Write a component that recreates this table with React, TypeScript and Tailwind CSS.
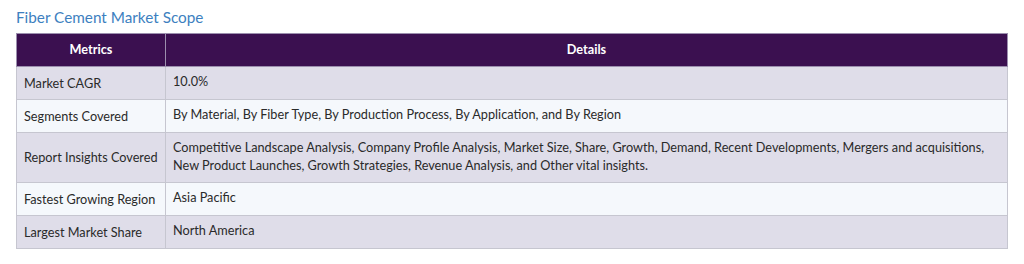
const rows: [string, string][] = [
  ['Market CAGR', '10.0%'],
  ['Segments Covered', 'By Material, By Fiber Type, By Production Process, By Application, and By Region'],
  ['Report Insights Covered', 'Competitive Landscape Analysis, Company Profile Analysis, Market Size, Share, Growth, Demand, Recent Developments, Mergers and acquisitions, New Product Launches, Growth Strategies, Revenue Analysis, and Other vital insights.'],
  ['Fastest Growing Region', 'Asia Pacific'],
  ['Largest Market Share', 'North America'],
]

export default function App() {
  return (
    <div className="w-[1024px] h-[264px] bg-white font-['Lato',sans-serif] pt-[7px] pl-4">
      <h2 className="text-[15.3px] leading-[20px] text-[#3d7fc0] mb-[6px]">Fiber Cement Market Scope</h2>
      <table className="w-[992px] table-fixed border-collapse text-[12.7px] text-[#2a2a2a]">
        <thead>
          <tr className="bg-[#3b1050] text-white h-[33px]">
            <th className="w-[149px] font-bold border border-[#9c8fae]">Metrics</th>
            <th className="font-bold border border-[#9c8fae]">Details</th>
          </tr>
        </thead>
        <tbody>
          {rows.map(([k, v], i) => (
            <tr key={k} className={i % 2 === 0 ? 'bg-[#dfdde9]' : 'bg-[#f5f8fc]'}>
              <td className={`px-[7px] whitespace-nowrap border border-[#c6c6d0] align-middle ${i === 2 ? 'h-[50px]' : 'h-[33px]'}`}>
                <div className="pt-[1px]">{k}</div>
              </td>
              <td className="px-[7px] border border-[#c6c6d0] leading-[18px] align-top pt-[5px]">{v}</td>
            </tr>
          ))}
        </tbody>
      </table>
    </div>
  )
}
